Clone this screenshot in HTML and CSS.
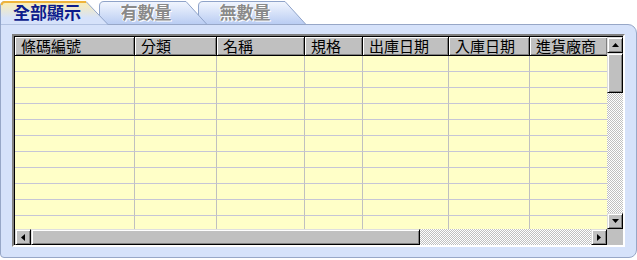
FILE: index.html
```html
<!DOCTYPE html>
<html>
<head>
    <meta charset="UTF-8">
    <title>庫存查詢</title>
    <link rel="stylesheet" href="styles.css">
</head>
<body>
    <div class="window">
        <div class="tabs">
            <div class="tab active">
                <svg class="tab-shape" width="108" height="25" viewBox="0 0 108 25">
                    <defs>
                        <linearGradient id="gActive" x1="0" y1="0" x2="0" y2="1">
                            <stop offset="0" stop-color="#fdeeb0"/>
                            <stop offset="0.7" stop-color="#d6e2fa"/>
                        </linearGradient>
                    </defs>
                    <path d="M0.5,25 V6 Q0.5,1.5 5,1.5 H86 L108,24.5 V25 Z" fill="url(#gActive)" stroke="#8fa3c9"/>
                    <path d="M1.5,5 Q2,2 5,2 H86" fill="none" stroke="#efb43c" stroke-width="2"/>
                </svg>
                <span class="tab-label">全部顯示</span>
            </div>
            <div class="tab second">
                <svg class="tab-shape" width="108" height="25" viewBox="0 0 108 25">
                    <defs>
                        <linearGradient id="gTab" x1="0" y1="0" x2="0" y2="1">
                            <stop offset="0" stop-color="#f2f6fe"/>
                            <stop offset="1" stop-color="#b7cbf2"/>
                        </linearGradient>
                    </defs>
                    <path d="M0.5,25 V6 Q0.5,1.5 5,1.5 H87 L108,24.5 V25 Z" fill="url(#gTab)" stroke="#8fa3c9"/>
                </svg>
                <span class="tab-label">有數量</span>
            </div>
            <div class="tab third">
                <svg class="tab-shape" width="108" height="25" viewBox="0 0 108 25">
                    <path d="M0.5,25 V6 Q0.5,1.5 5,1.5 H87 L108,24.5 V25 Z" fill="url(#gTab)" stroke="#8fa3c9"/>
                </svg>
                <span class="tab-label">無數量</span>
            </div>
        </div>

        <div class="panel">
            <div class="grid">
                <div class="grid-body">
                    <div class="table" id="table">
                        <div class="head">條碼編號</div>
                        <div class="head">分類</div>
                        <div class="head">名稱</div>
                        <div class="head">規格</div>
                        <div class="head">出庫日期</div>
                        <div class="head">入庫日期</div>
                        <div class="head">進貨廠商</div>
                    </div>
                    <div class="vscroll">
                        <div class="sbtn">
                            <svg width="7" height="4" viewBox="0 0 7 4"><path d="M3.5,0 L7,4 H0 Z" fill="#000"/></svg>
                        </div>
                        <div class="thumb vthumb"></div>
                        <div class="track"></div>
                        <div class="sbtn">
                            <svg width="7" height="4" viewBox="0 0 7 4"><path d="M0,0 H7 L3.5,4 Z" fill="#000"/></svg>
                        </div>
                    </div>
                </div>
                <div class="hscroll-row">
                    <div class="hscroll">
                        <div class="sbtn">
                            <svg width="4" height="7" viewBox="0 0 4 7"><path d="M4,0 V7 L0,3.5 Z" fill="#000"/></svg>
                        </div>
                        <div class="thumb hthumb"></div>
                        <div class="track"></div>
                        <div class="sbtn">
                            <svg width="4" height="7" viewBox="0 0 4 7"><path d="M0,0 L4,3.5 L0,7 Z" fill="#000"/></svg>
                        </div>
                    </div>
                    <div class="corner"></div>
                </div>
            </div>
        </div>
    </div>
    <script>
        // empty rows of the grid
        const table = document.getElementById('table');
        for (let r = 0; r < 11; r++) {
            for (let c = 0; c < 7; c++) {
                const cell = document.createElement('div');
                cell.className = 'cell';
                table.appendChild(cell);
            }
        }
    </script>
</body>
</html>
```

FILE: styles.css
```css
body {
    margin: 0;
    background: #fff;
    font-family: "Noto Sans CJK TC", "Noto Sans", sans-serif;
}
.window {
    width: 637px;
    height: 260px;
}
.tabs {
    display: flex;
    height: 25px;
    margin-bottom: -1px;
}
.tab {
    position: relative;
    width: 108px;
    height: 25px;
    margin-right: -9px;
    flex: none;
}
.tab.active {
    z-index: 3;
}
.tab.second {
    z-index: 1;
}
.tab.third {
    z-index: 0;
}
.tab-shape {
    position: absolute;
    left: 0;
    top: 0;
}
.tab-label {
    position: relative;
    display: block;
    width: 94px;
    text-align: center;
    font-size: 17px;
    font-weight: bold;
    line-height: 24px;
    color: #8a8a8a;
    text-shadow: 1px 1px 0 #fff, -1px 0 0 #fff;
}
.tab.active .tab-label {
    color: #0c1b8c;
    text-shadow: none;
}
.panel {
    position: relative;
    z-index: 2;
    height: 234px;
    background: #d6e2fa;
    border: 1px solid #97a7c7;
    border-radius: 0 9px 8px 4px;
    padding: 9px 11px 10px 11px;
    box-sizing: border-box;
}
.grid {
    width: 613px;
    height: 213px;
    box-sizing: border-box;
    border: 2px solid;
    border-color: #808080 #fff #fff #808080;
    box-shadow: inset 1px 1px 0 #000;
    display: flex;
    flex-direction: column;
    background: #ffffc8;
}
.grid-body {
    display: flex;
    height: 193px;
}
.table {
    width: 593px;
    height: 193px;
    overflow: hidden;
    display: grid;
    grid-template-columns: 120px 82px 88px 58px 86px 81px 78px;
    grid-auto-rows: 16px;
    grid-template-rows: 19px;
    padding-left: 1px;
    padding-top: 1px;
    box-sizing: border-box;
}
.head {
    background: #c0c0c0;
    font-size: 15px;
    line-height: 18px;
    padding-left: 6px;
    color: #000;
    border-right: 1px solid #000;
    border-bottom: 1px solid #000;
    box-shadow: inset 1px 1px 0 #fff, inset -1px -1px 0 #808080;
    white-space: nowrap;
}
.cell {
    background: #ffffc8;
    border-right: 1px solid #c0c0c0;
    border-bottom: 1px solid #c6c6d6;
}
.vscroll {
    width: 16px;
    display: flex;
    flex-direction: column;
    padding-top: 1px;
    box-sizing: border-box;
}
.sbtn {
    width: 16px;
    height: 16px;
    flex: none;
    box-sizing: border-box;
    background: #c0c0c0;
    border: 1px solid;
    border-color: #dfdfdf #000 #000 #dfdfdf;
    box-shadow: inset 1px 1px 0 #fff, inset -1px -1px 0 #808080;
    display: flex;
    align-items: center;
    justify-content: center;
}
.thumb {
    flex: none;
    box-sizing: border-box;
    background: #c0c0c0;
    border: 1px solid;
    border-color: #dfdfdf #000 #000 #dfdfdf;
    box-shadow: inset 1px 1px 0 #fff, inset -1px -1px 0 #808080;
}
.vthumb {
    height: 40px;
}
.hthumb {
    width: 389px;
}
.track {
    flex: 1;
    background: repeating-conic-gradient(#fff 0 25%, #c0c0c0 0 50%) 0 0 / 2px 2px;
}
.hscroll-row {
    display: flex;
    height: 16px;
}
.hscroll {
    display: flex;
    width: 593px;
    padding-left: 1px;
    box-sizing: border-box;
}
.corner {
    width: 16px;
    background: #c0c0c0;
}
```
